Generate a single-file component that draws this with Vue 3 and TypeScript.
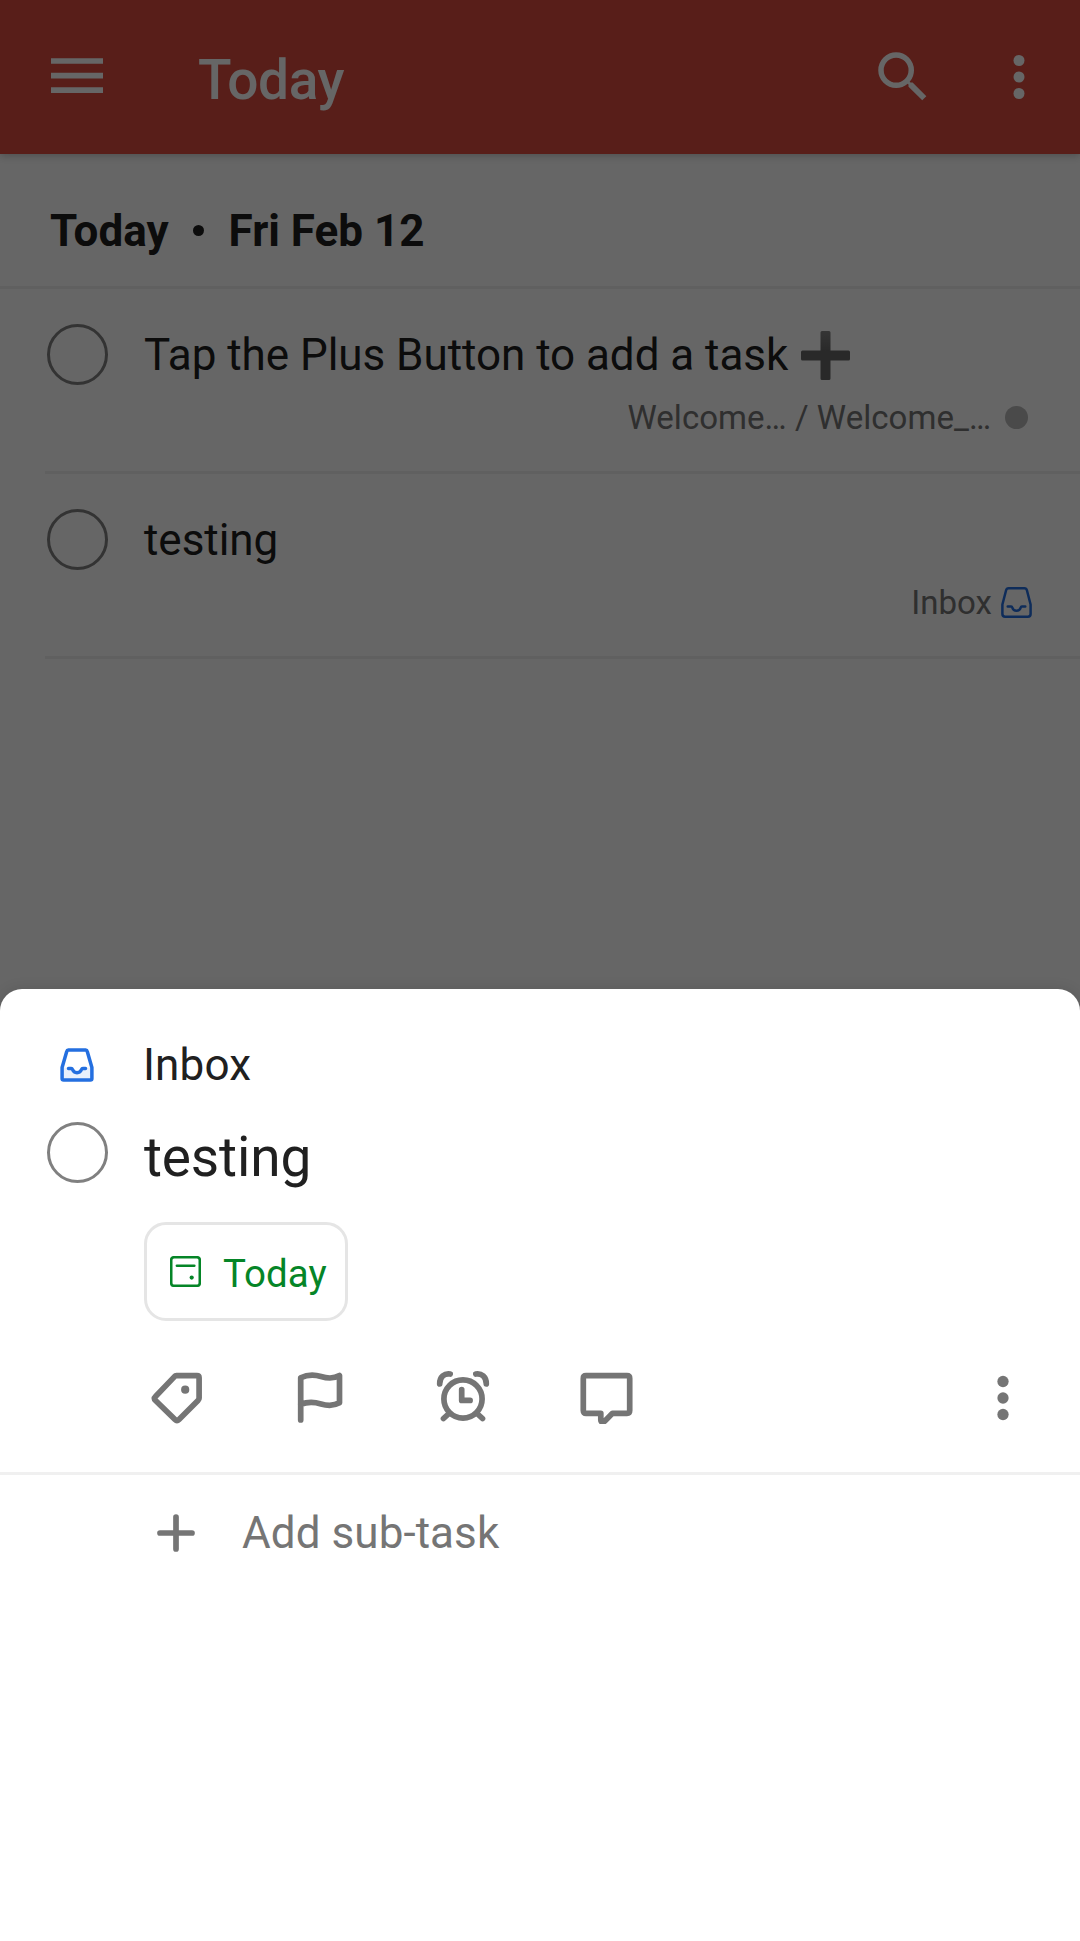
<script setup lang="ts">
interface Task {
  id: number
  title: string
  plus: boolean
  project: string
  marker: 'dot' | 'inbox'
}

const tasks: Task[] = [
  { id: 1, title: 'Tap the Plus Button to add a task', plus: true, project: 'Welcome… / Welcome_…', marker: 'dot' },
  { id: 2, title: 'testing', plus: false, project: 'Inbox', marker: 'inbox' },
]
</script>

<template>
  <div class="screen">
    <header class="bar">
      <svg class="menu" viewBox="0 0 52 36" width="52" height="36">
        <path d="M0 3h52M0 17.7h52M0 32.2h52" stroke="currentColor" stroke-width="5.7" />
      </svg>
      <h1>Today</h1>
      <svg class="search" viewBox="0 0 24 24" width="66" height="66">
        <path fill="currentColor" d="M15.5 14h-.79l-.28-.27A6.47 6.47 0 0 0 16 9.5 6.5 6.5 0 1 0 9.5 16c1.61 0 3.09-.59 4.23-1.57l.27.28v.79l5 4.99L20.49 19l-4.99-5zm-6 0a4.5 4.5 0 1 1 0-9 4.5 4.5 0 0 1 0 9z" />
      </svg>
      <svg class="more" viewBox="0 0 24 24" width="66" height="66">
        <g fill="currentColor"><circle cx="12" cy="6" r="2" /><circle cx="12" cy="12" r="2" /><circle cx="12" cy="18" r="2" /></g>
      </svg>
    </header>

    <main class="list">
      <h2><span>Today</span><i class="sep"></i><span>Fri Feb 12</span></h2>
      <article v-for="task in tasks" :key="task.id" class="task">
        <span class="check"></span>
        <div class="body">
          <div class="name">
            <span>{{ task.title }}</span>
            <svg v-if="task.plus" class="emoji" viewBox="0 0 49 49" width="49" height="49">
              <defs>
                <linearGradient id="plusFill" x1="0" y1="0" x2="0" y2="1">
                  <stop offset="0" stop-color="#858585" />
                  <stop offset=".4" stop-color="#686868" />
                </linearGradient>
              </defs>
              <path fill="url(#plusFill)" d="M21 0h7q1.5 0 1.5 1.5v18H47.500q1.500 0 1.500 1.500v7q0 1.500-1.500 1.500H29.500v18q0 1.500-1.500 1.500h-7q-1.500 0-1.500-1.500v-18H1.500q-1.500 0-1.500-1.500v-7q0-1.500 1.500-1.500h18v-18Q19.500 0 21 0z" />
            </svg>
          </div>
          <div class="meta">
            <span>{{ task.project }}</span>
            <i v-if="task.marker === 'dot'" class="dot"></i>
            <svg v-else class="tray" viewBox="0 0 31 31" width="31" height="31" fill="none" stroke="#246fe0" stroke-width="2.5" stroke-linecap="round" stroke-linejoin="round">
              <path d="M7.600 1.300h15.800q2 0 2.500 2L29.600 17.500V27q0 2.700-2.700 2.700H4.100Q1.400 29.700 1.400 27V17.500L5.100 3.300q.5-2 2.500-2z" />
              <path d="M6.700 19.600h3.500q.8 0 1.100 1a4.400 4.400 0 0 0 8.400 0q.3-1 1.100-1h3.500" />
            </svg>
          </div>
        </div>
      </article>
    </main>
    <div class="scrim"></div>

    <section class="sheet">
      <div class="project">
        <svg viewBox="0 0 34 34" width="34" height="34" fill="none" stroke="#246fe0" stroke-linecap="round" stroke-linejoin="round">
          <path d="M2 19.500h8q1.500 5.500 6.900 5.500t6.900-5.500h8V32H2z" fill="#e9f0fc" stroke="none" />
          <path d="M8.300 2H25.700q1.200 0 1.500 1.200L31.900 19.500V30.500q0 1.500-1.500 1.500H3.600q-1.500 0-1.500-1.500V19.500L6.800 3.200Q7.100 2 8.300 2z" stroke-width="3.500" />
          <path d="M8.500 20.400h2.600q1 0 1.400 1.100a4.800 4.800 0 0 0 9 0q.4-1.100 1.400-1.100h2.600" stroke-width="3.500" />
        </svg>
        <span>Inbox</span>
      </div>
      <div class="headline">
        <span class="check"></span>
        <span class="title">testing</span>
      </div>
      <div class="chip">
        <svg viewBox="0 0 31 31" width="31" height="31" fill="none" stroke="#058527">
          <rect x="1.200" y="1.200" width="28.600" height="28.600" rx="2.800" stroke-width="2.600" />
          <path d="M6.900 9.800h17.400" stroke-width="2.600" stroke-linecap="round" />
          <circle cx="21.700" cy="21.600" r="2.100" fill="#058527" stroke="none" />
        </svg>
        <span>Today</span>
      </div>
      <div class="actions">
        <svg class="tag" viewBox="0 0 54 54" width="54" height="54">
          <path d="M26.500 5.600H47q2.100 0 2.100 2.100V28q0 1.500-1.100 2.600L29 49.600q-2 2-4 0L5.500 30.500q-2-2 0-4L24.500 6.600q.8-1 2-1z" />
          <circle cx="35.200" cy="19.700" r="4.100" class="solid" />
        </svg>
        <svg class="flag" viewBox="0 0 54 54" width="54" height="54">
          <path d="M7.700 50V7.800C15 4.200 22 4.600 28 6.500S40 9.200 46.500 5.600V32.800C40 36.400 34 35.700 28 33.900S15 31.400 7.700 34.400" />
        </svg>
        <svg class="alarm" viewBox="0 0 54 54" width="54" height="54">
          <circle cx="27" cy="29" r="19.100" />
          <path d="M25.700 19.500v10.900h8.400M13 43.500l-5.500 5M41 43.500l5.500 5M3.700 13.900C3.600 7 8.500 3 14.200 4M50.300 13.900C50.400 7 45.500 3 39.800 4" />
        </svg>
        <svg class="comment" viewBox="0 0 54 54" width="54" height="54">
          <path d="M6 5.700H47q2.700 0 2.700 2.700V40.600q0 2.700-2.700 2.700H32.500L25.400 50.500q-1.300 1.500-2.600 1.500-2 0-2-2V43.300H6q-2.700 0-2.700-2.700V8.400q0-2.700 2.700-2.700z" />
        </svg>
        <svg class="overflow" viewBox="0 0 24 24" width="66" height="66">
          <g class="solid"><circle cx="12" cy="6" r="2.050" /><circle cx="12" cy="12" r="2.050" /><circle cx="12" cy="18" r="2.050" /></g>
        </svg>
      </div>
      <div class="subtask">
        <svg viewBox="0 0 40 40" width="40" height="40">
          <path d="M20 4v32M4 20h32" stroke="#757575" stroke-width="5.700" stroke-linecap="round" />
        </svg>
        <span>Add sub-task</span>
      </div>
    </section>
  </div>
</template>

<style>
body {
  margin: 0;
}
</style>

<style scoped>
.screen {
  position: relative;
  box-sizing: border-box;
  width: 1080px;
  height: 1941px;
  overflow: hidden;
  display: flex;
  flex-direction: column;
  background: #fff;
  color: #202020;
  font-family: Roboto, sans-serif;
  font-size: 44px;
}
svg {
  display: block;
  flex: none;
}
h1,
h2 {
  margin: 0;
}
.bar {
  flex: none;
  height: 154px;
  box-sizing: border-box;
  display: flex;
  align-items: center;
  padding: 0 28px 0 51px;
  background: #db4c3f;
  color: #fff;
  box-shadow: 0 1px 9px rgba(0, 0, 0, 0.28);
  z-index: 1;
}
.menu {
  margin-top: -2px;
}
h1 {
  flex: 1;
  margin-left: 95px;
  padding-top: 6px;
  font-size: 55px;
  line-height: 64px;
  font-weight: 500;
  letter-spacing: -0.45px;
}
.more {
  margin-left: 50px;
}
.list {
  height: 835px;
  flex: none;
}
h2 {
  box-sizing: border-box;
  height: 135px;
  padding: 22px 0 0 50px;
  border-bottom: 3px solid #f0f0f0;
  display: flex;
  align-items: center;
  font-size: 44px;
  line-height: 52px;
  font-weight: 700;
}
.sep {
  width: 11px;
  height: 11px;
  margin: -1px 25px 0 24px;
  border-radius: 50%;
  background: #202020;
}
.task {
  box-sizing: border-box;
  height: 185px;
  margin-left: 45px;
  padding: 35px 48px 0 2px;
  border-bottom: 3px solid #f0f0f0;
  display: flex;
}
.check {
  flex: none;
  box-sizing: border-box;
  width: 61px;
  height: 61px;
  border: 3px solid #808080;
  border-radius: 50%;
}
.body {
  flex: 1;
  margin-left: 36px;
  padding-top: 5px;
}
.name {
  height: 52px;
  line-height: 52px;
  display: flex;
  align-items: center;
  letter-spacing: -0.04px;
}
.emoji {
  margin-left: 13px;
}
.meta {
  height: 38px;
  margin-top: 18px;
  line-height: 38px;
  font-size: 33px;
  letter-spacing: 0.04px;
  color: #757575;
  display: flex;
  justify-content: flex-end;
  align-items: center;
}
.dot {
  width: 23px;
  height: 23px;
  margin: -1px 4px 0 14px;
  border-radius: 50%;
  background: #b8b8b8;
}
.tray {
  margin: -1px 0 0 9px;
}
.scrim {
  position: absolute;
  inset: 0;
  z-index: 2;
  background: rgba(0, 0, 0, 0.6);
}
.sheet {
  position: relative;
  z-index: 3;
  flex: 1;
  background: #fff;
  border-radius: 22px 22px 0 0;
  box-shadow: 0 0 14px rgba(0, 0, 0, 0.12);
}
.project {
  height: 52px;
  padding: 50px 0 0 60px;
  display: flex;
  align-items: center;
  gap: 49px;
}
.project span {
  letter-spacing: 0.15px;
}
.headline {
  margin-top: 31px;
  padding-left: 47px;
  height: 61px;
  display: flex;
  align-items: center;
}
.title {
  margin: 9px 0 0 36px;
  font-size: 55px;
  line-height: 64px;
  letter-spacing: -0.15px;
}
.chip {
  box-sizing: border-box;
  width: 204px;
  height: 99px;
  margin: 39px 0 0 144px;
  padding-left: 23px;
  border: 3px solid #e5e5e5;
  border-radius: 22px;
  display: flex;
  align-items: center;
  gap: 22px;
  color: #058527;
  font-size: 38.500px;
}
.chip span {
  padding-top: 3px;
}
.actions {
  height: 151px;
  padding: 0 44px 0 150px;
  border-bottom: 3px solid #f0f0f0;
  display: flex;
  align-items: center;
}
.actions svg {
  fill: none;
  stroke: #757575;
  stroke-width: 5.700px;
  stroke-linecap: round;
  stroke-linejoin: round;
}
.actions .solid {
  fill: #757575;
  stroke: none;
}
.flag {
  margin-left: 89px;
}
.alarm {
  margin-left: 89px;
}
.comment {
  margin-left: 90px;
}
.overflow {
  margin: 2px 0 0 auto;
}
.subtask {
  height: 116px;
  padding-left: 156px;
  display: flex;
  align-items: center;
  gap: 46px;
  color: #757575;
  letter-spacing: 0.07px;
}
</style>
